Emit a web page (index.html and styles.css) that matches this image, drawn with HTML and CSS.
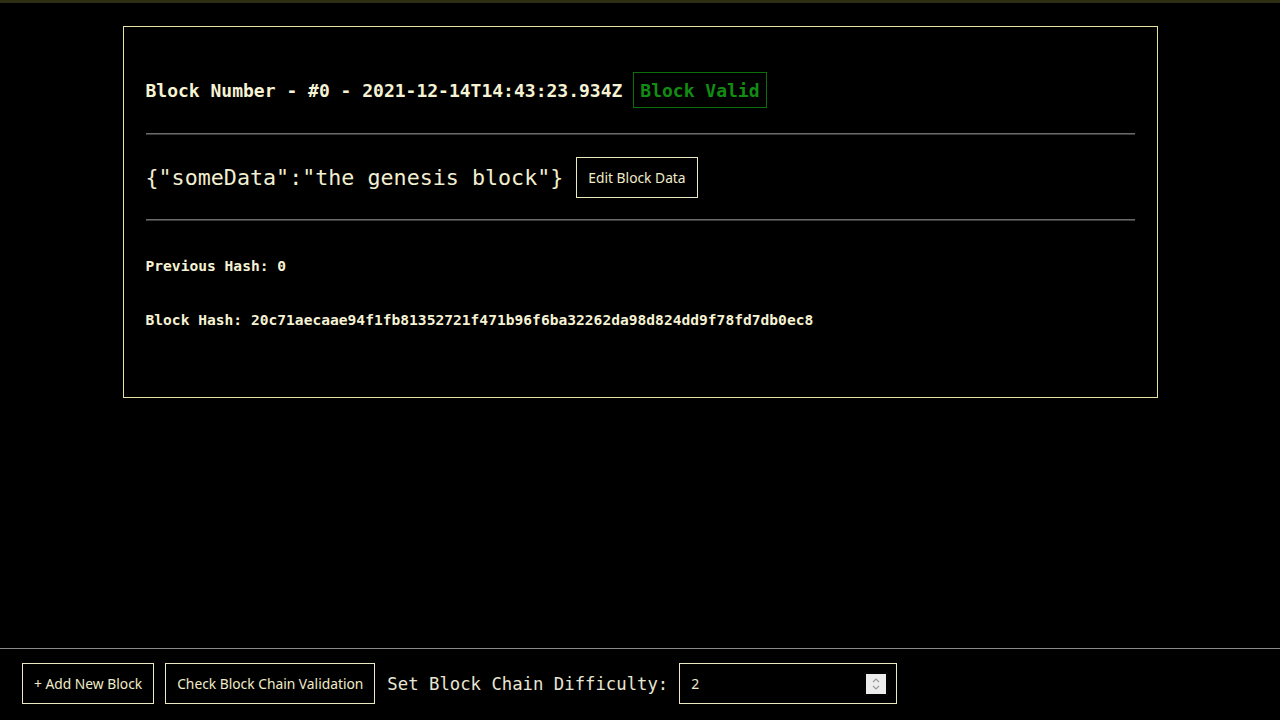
FILE: index.html
```html
<!DOCTYPE html>
<html>
<head>
<meta charset="utf-8">
<title>Block Chain</title>
<link rel="stylesheet" href="styles.css">
</head>
<body>
<div class="topbar"></div>
<main class="main">
  <section class="card">
    <div class="card-head">
      <h3 class="title">Block Number - #0 - 2021-12-14T14:43:23.934Z</h3>
      <span class="badge">Block Valid</span>
    </div>
    <hr class="rule">
    <div class="data-row">
      <span class="data">{"someData":"the genesis block"}</span>
      <button class="btn">Edit Block Data</button>
    </div>
    <hr class="rule">
    <p class="hash hash-prev">Previous Hash: 0</p>
    <p class="hash hash-block">Block Hash: 20c71aecaae94f1fb81352721f471b96f6ba32262da98d824dd9f78fd7db0ec8</p>
  </section>
</main>
<footer class="footer">
  <button class="btn btn-foot">+ Add New Block</button>
  <button class="btn btn-foot">Check Block Chain Validation</button>
  <label class="diff-label">Set Block Chain Difficulty:</label>
  <div class="num-input">
    <span class="num-value">2</span>
    <span class="spinner">
      <svg width="10" height="16" viewBox="0 0 10 16"><path d="M2 6 L5 3 L8 6" fill="none" stroke="#9a9a9a" stroke-width="1.2"/><path d="M2 10 L5 13 L8 10" fill="none" stroke="#9a9a9a" stroke-width="1.2"/></svg>
    </span>
  </div>
</footer>
</body>
</html>
```

FILE: styles.css
```css
html, body {
  margin: 0;
  padding: 0;
  background: #000;
}
body {
  height: 720px;
  display: flex;
  flex-direction: column;
  color: #f4f0cf;
  font-family: "DejaVu Sans Mono", "Liberation Mono", monospace;
  overflow: hidden;
}
.topbar {
  height: 3px;
  background: #2e2e12;
  flex: none;
}
.main {
  flex: 1;
  padding-top: 23px;
}
.card {
  margin: 0 auto;
  border: 1px solid #e6e49a;
  padding: 0 22px;
  box-sizing: border-box;
  width: 1035px;
  height: 372px;
}
.card-head {
  display: flex;
  align-items: center;
  gap: 11px;
  margin-top: 45px;
  height: 36px;
}
.title {
  margin: 0;
  font-size: 18px;
  font-weight: bold;
  color: #f6f2d4;
}
.badge {
  height: 36px;
  box-sizing: border-box;
  border: 1px solid #0b6e0b;
  color: #128c12;
  font-size: 18px;
  font-weight: bold;
  padding: 0 6px;
  display: flex;
  align-items: center;
}
.rule {
  margin: 0;
  border: none;
  border-top: 1px solid #6a6a6a;
  border-bottom: 1px solid #3a3a3a;
  height: 0;
}
.card-head + .rule {
  margin-top: 25px;
}
.data-row {
  display: flex;
  align-items: center;
  gap: 13px;
  margin: 22px 0 21px;
  height: 41px;
}
.data {
  font-size: 21.7px;
  color: #f2eed0;
}
.btn {
  background: #000;
  color: #f0ecc8;
  border: 1px solid #ece9c0;
  font-family: "Noto Sans", "Open Sans", sans-serif;
  font-size: 13.8px;
  height: 41px;
  padding: 0 11px;
  cursor: pointer;
}
.hash {
  margin: 0;
  font-size: 14.6px;
  font-weight: bold;
  line-height: 20px;
  color: #f6f2d4;
}
.hash-prev {
  margin-top: 35px;
}
.hash-block {
  margin-top: 34px;
}
.footer {
  flex: none;
  height: 72px;
  box-sizing: border-box;
  border-top: 1px solid #8a8a8a;
  display: flex;
  align-items: center;
  padding: 0 22px 2px;
  gap: 11px;
}
.btn-foot {
  height: 41px;
  padding: 0 11px;
}
.diff-label {
  font-size: 17.3px;
  color: #e8e6d4;
  margin-left: 1px;
}
.num-input {
  width: 218px;
  height: 41px;
  box-sizing: border-box;
  border: 1px solid #ece9c0;
  display: flex;
  align-items: center;
  justify-content: space-between;
  padding: 0 10px 0 11px;
  font-family: "Noto Sans", sans-serif;
  font-size: 14px;
  color: #eeeacc;
}
.spinner {
  width: 20px;
  height: 20px;
  background: #ececec;
  display: flex;
  align-items: center;
  justify-content: center;
}
```
